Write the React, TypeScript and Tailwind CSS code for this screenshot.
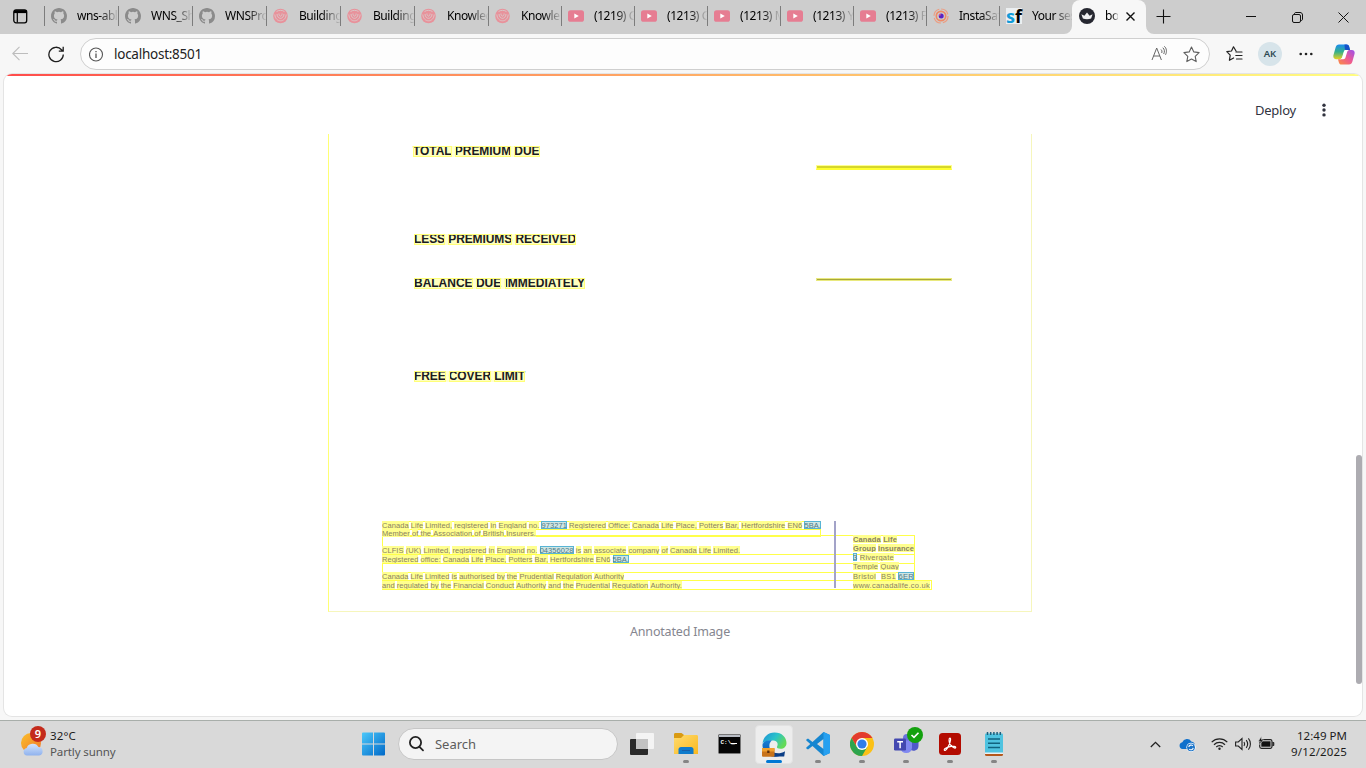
import { useLayoutEffect, useRef, type ReactNode } from "react";

const UI = "font-['Noto_Sans',sans-serif]";

/* Text stretched to a given width through its letter spacing. */
function Fit({ w, className = "", children }: { w: number; className?: string; children: ReactNode }) {
  const ref = useRef<HTMLSpanElement>(null);
  useLayoutEffect(() => {
    const el = ref.current;
    if (!el) return;
    el.style.letterSpacing = "0px";
    const n = el.textContent?.length || 1;
    el.style.letterSpacing = `${(w - el.getBoundingClientRect().width) / n}px`;
  }, [w]);
  return (
    <span ref={ref} className={`inline-block whitespace-pre ${className}`}>
      {children}
    </span>
  );
}

/* ---------- tab icons ---------- */
const GitHub = () => (
  <svg width="16" height="16" viewBox="0 0 16 16" fill="#8b8b8b">
    <path d="M8 0C3.58 0 0 3.58 0 8c0 3.54 2.29 6.53 5.47 7.59.4.07.55-.17.55-.38 0-.19-.01-.82-.01-1.49-2.01.37-2.53-.49-2.69-.94-.09-.23-.48-.94-.82-1.13-.28-.15-.68-.52-.01-.53.63-.01 1.08.58 1.23.82.72 1.21 1.87.87 2.33.66.07-.52.28-.87.51-1.07-1.78-.2-3.64-.89-3.64-3.95 0-.87.31-1.59.82-2.15-.08-.2-.36-1.02.08-2.12 0 0 .67-.21 2.2.82a7.6 7.6 0 0 1 4 0c1.53-1.04 2.2-.82 2.2-.82.44 1.1.16 1.92.08 2.12.51.56.82 1.27.82 2.15 0 3.07-1.87 3.75-3.65 3.95.29.25.54.73.54 1.48 0 1.07-.01 1.93-.01 2.2 0 .21.15.46.55.38A8 8 0 0 0 16 8c0-4.42-3.58-8-8-8z" />
  </svg>
);
const Swirl = () => (
  <svg width="16" height="16" viewBox="0 0 16 16" fill="none">
    <circle cx="7.500" cy="8" r="7.300" fill="#e8929b" />
    <path d="M1.800 6.500c.6 8.400 10.800 8.400 11.400 0M4 6c.4 5.800 6.600 5.800 7 0M5.900 5.500c.2 3.600 3 3.600 3.200 0M3.500 3.600c2.200-1.700 5.800-1.700 8 0" stroke="#d9c9cb" strokeWidth=".9" />
  </svg>
);
const Tube = () => (
  <svg width="16" height="16" viewBox="0 0 16 16">
    <rect x="0" y="2.300" width="16" height="11.500" rx="2.600" fill="#e67d92" />
    <path d="M6.300 5.600v4.900L10.800 8z" fill="#fff" />
  </svg>
);
const Insta = () => (
  <svg width="16" height="16" viewBox="0 0 16 16" fill="none">
    <circle cx="8" cy="8" r="7" stroke="#ed9c80" strokeWidth="1.200" strokeDasharray="9 2" />
    <circle cx="8" cy="8" r="4.700" stroke="#ef8a66" strokeWidth="1.700" />
    <circle cx="8.200" cy="8" r="2.500" fill="#5a22c4" />
    <circle cx="6.800" cy="6.800" r="1" fill="#d95b8d" />
  </svg>
);
const Sf = () => (
  <span className="flex h-4 w-4 items-center justify-center bg-[#eceff1] font-['Open_Sans',sans-serif] text-[18px] leading-[16px] font-bold">
    <span className="w-[9px] text-[#129bd8]">s</span>
    <span className="w-[7px] text-black">f</span>
  </span>
);
const Crown = () => (
  <svg width="16" height="16" viewBox="0 0 16 16">
    <circle cx="8" cy="8" r="8" fill="#262730" />
    <path d="M2.400 6.300l3 1.500L8 4.600l2.600 3.200 3-1.500-1.500 4.200c-2.400.9-5.800.9-8.200 0z" fill="#f0f0f2" />
  </svg>
);

const tabs: { icon: () => ReactNode; label: string }[] = [
  { icon: GitHub, label: "wns-abl" },
  { icon: GitHub, label: "WNS_Sh" },
  { icon: GitHub, label: "WNSPro" },
  { icon: Swirl, label: "Building" },
  { icon: Swirl, label: "Building" },
  { icon: Swirl, label: "Knowled" },
  { icon: Swirl, label: "Knowle" },
  { icon: Tube, label: "(1219) G" },
  { icon: Tube, label: "(1213) G" },
  { icon: Tube, label: "(1213) M" },
  { icon: Tube, label: "(1213) Y" },
  { icon: Tube, label: "(1213) F" },
  { icon: Insta, label: "InstaSaf" },
  { icon: Sf, label: "Your ses" },
];

function TabStrip() {
  return (
    <div className="flex h-[34px] shrink-0 bg-[#cdcdcd]">
      <div className="flex w-[44px] shrink-0 items-center pb-0.5 pl-[13px]">
        <svg width="15" height="15" viewBox="0 0 15 15" fill="none" stroke="#000">
          <rect x="0.800" y="0.800" width="12.900" height="13" rx="2.200" strokeWidth="1.300" />
          <path d="M1 2.600h12.500" strokeWidth="3" />
          <path d="M4.300 3v10.500" strokeWidth="1.200" />
        </svg>
      </div>
      {tabs.map((t, i) => (
        <div key={i} className={`flex shrink-0 items-center pb-0.5 ${i < 6 ? "w-[74px]" : "w-[73px]"}`}>
          <span className="h-5 w-px shrink-0 bg-[#7c7c7c]" />
          <span className="ml-[6px] w-4 shrink-0">{t.icon()}</span>
          <span className="ml-[10px] min-w-0 flex-1 overflow-hidden [mask-image:linear-gradient(to_right,black_55%,transparent_102%)] text-[12px] leading-[18px] tracking-[-0.45px] whitespace-nowrap text-black">
            {t.label}
          </span>
        </div>
      ))}
      <div className="relative flex w-[74px] shrink-0 items-center rounded-t-lg bg-[#f7f7f7] pb-0.5 pl-[7px]">
        <svg className="absolute bottom-0 -left-2" width="8" height="8">
          <path d="M8 0v8H0a8 8 0 0 0 8-8z" fill="#f7f7f7" />
        </svg>
        <svg className="absolute -right-2 bottom-0" width="8" height="8">
          <path d="M0 0v8h8a8 8 0 0 1-8-8z" fill="#f7f7f7" />
        </svg>
        <Crown />
        <span className="ml-[10px] w-[13px] overflow-hidden [mask-image:linear-gradient(to_right,black_55%,transparent_110%)] text-[12px] leading-[18px] tracking-[-0.3px] text-black">
          bo
        </span>
        <svg className="ml-[8px]" width="9" height="9" viewBox="0 0 9 9" stroke="#111" strokeWidth="1.400">
          <path d="M.5.500l8 8M8.500.500l-8 8" />
        </svg>
      </div>
      <div className="flex flex-1 items-center pb-px pl-[10px]">
        <svg width="15" height="15" viewBox="0 0 15 15" stroke="#111" strokeWidth="1.100">
          <path d="M7.500.500v14M.5 7.500h14" />
        </svg>
        <svg className="mt-px ml-[75px]" width="10" height="10" stroke="#111">
          <path d="M0 4.500h10" />
        </svg>
        <svg className="mt-px ml-[36px]" width="11" height="11" viewBox="0 0 11 11" fill="none" stroke="#111">
          <rect x=".5" y="2.500" width="8" height="8" rx="1.500" />
          <path d="M2.500 2C2.500 1 3 .5 4 .5h4c1.500 0 2.500 1 2.500 2.500v4c0 1-.500 1.500-1.500 1.500" />
        </svg>
        <svg className="mt-px ml-[35px]" width="11" height="11" viewBox="0 0 11 11" stroke="#111">
          <path d="M.5.500l10 10M10.500.500l-10 10" />
        </svg>
      </div>
    </div>
  );
}

function Toolbar() {
  return (
    <div className="flex h-[40px] shrink-0 items-center bg-[#f7f7f7]">
      <svg className="ml-[12px]" width="16" height="16" viewBox="0 0 16 16" fill="none" stroke="#bdbdbd" strokeWidth="1.100">
        <path d="M16 7.500H.8M7.500 .8L.8 7.500 7.500 14.200" />
      </svg>
      <svg className="ml-[20px]" width="17" height="17" viewBox="0 0 17 17" fill="none" stroke="#1e1e1e" strokeWidth="1.300">
        <path d="M15.300 8.500a7.200 7.200 0 1 1-1.800-4.800L15 5.200M15.200.8V5.200H10.800" />
      </svg>
      <div className="ml-[15px] flex h-8 w-[1130px] items-center rounded-full border border-[#cfcfcf] bg-[#fdfdfd] pl-[8px]">
        <svg width="15" height="15" viewBox="0 0 15 15" fill="none" stroke="#555">
          <circle cx="7" cy="7.500" r="6.500" strokeWidth="1.100" />
          <path d="M7 6.500v4.500M7 4v1.300" strokeWidth="1.300" />
        </svg>
        <span className="ml-[10px] text-[13.500px] leading-5 text-[#222]">
          <Fit w={88}>localhost:8501</Fit>
        </span>
        <svg className="ml-auto" width="17" height="16" viewBox="0 0 17 16" fill="none" stroke="#666" strokeWidth="1">
          <path d="M1 14L5.700 2l4.700 12M2.600 10h6.300M10 3.500c1 .8 1.200 2.200.7 3.500M11.800 1.700c1.900 1.700 2 4.200.9 6.300M13.300.3c2.500 2.100 2.700 5.700 1.200 8.500" />
        </svg>
        <svg className="mr-[9px] ml-[15px]" width="17" height="17" viewBox="0 0 17 17" fill="none" stroke="#5f5f5f" strokeWidth="1.100" strokeLinejoin="round">
          <path d="M8.500 1l2.300 4.900 5.300.7-3.900 3.700 1 5.300-4.700-2.600-4.700 2.600 1-5.300L.9 6.600l5.300-.7z" />
        </svg>
      </div>
      <svg className="ml-[16px]" width="17" height="16" viewBox="0 0 17 16" fill="none" stroke="#222" strokeWidth="1.200" strokeLinejoin="round" strokeLinecap="round">
        <path d="M10 5L7.500.8 5.500 5 .8 5.700l3.400 3.400-.8 5.200 4.200-2.300M10 6h6M9.800 9.500H16M10.500 13H16" />
      </svg>
      <span className="ml-[15px] flex h-6 w-6 items-center justify-center rounded-full bg-[#d7e4ea] text-[9.500px] font-semibold text-[#2c4a52]">
        AK
      </span>
      <svg className="ml-[17px]" width="15" height="4" fill="#222">
        <circle cx="1.700" cy="2" r="1.300" />
        <circle cx="7" cy="2" r="1.300" />
        <circle cx="12.300" cy="2" r="1.300" />
      </svg>
      <svg className="ml-[19px]" width="22" height="21" viewBox="0 0 22 21">
        <defs>
          <linearGradient id="cpA" x1="0" y1="0" x2="0" y2="1">
            <stop offset="0" stopColor="#1a8cf0" />
            <stop offset=".5" stopColor="#35b08a" />
            <stop offset="1" stopColor="#e8d021" />
          </linearGradient>
          <linearGradient id="cpB" x1="1" y1="0" x2="0" y2="1">
            <stop offset="0" stopColor="#9a50ee" />
            <stop offset=".5" stopColor="#ee5a91" />
            <stop offset="1" stopColor="#fb9040" />
          </linearGradient>
        </defs>
        <path d="M6 .5h7.500c1.600 0 2.200.8 2.700 2.300L17 6h-3.600c-1.400 0-2 .7-2.400 2l-1.600 5.300c-.4 1.300-1.100 1.900-2.400 1.900H3.200C.9 15.200-.1 13.200.5 11L2.600 3.400C3.100 1.500 4.200.5 6 .5z" fill="url(#cpA)" />
        <path d="M11.500.500h2c1.600 0 2.200.8 2.700 2.300L17 6h-3.500c-1 0-1.500-.5-1.700-1.500z" fill="#1551c8" />
        <path d="M16 20.500H8.500c-1.600 0-2.200-.8-2.700-2.300L5 15.200h2.500c1.400 0 2-.7 2.400-2L11.500 8c.4-1.300 1.100-2 2.400-2h4.900c2.300 0 3.300 1.800 2.700 4l-2.100 7.600c-.5 1.900-1.600 2.900-3.400 2.900z" fill="url(#cpB)" />
        <path d="M12 6h4c-1.300.4-1.700 1.500-2 2.500l-1.500 5c-.3 1.200-1 1.700-2.200 1.700H6.500c1.500-.2 2.200-.9 2.600-2L10.700 8c.2-1 .6-1.700 1.300-2z" fill="#fff" />
      </svg>
    </div>
  );
}

/* ---------- annotated page ---------- */
const headings = [
  { t: "TOTAL PREMIUM DUE", w: 126.5, c: "left-[85px] top-[12px]" },
  { t: "LESS PREMIUMS RECEIVED", w: 162, c: "left-[86px] top-[100px]" },
  { t: "BALANCE DUE IMMEDIATELY", w: 171, c: "left-[86px] top-[144px]" },
  { t: "FREE COVER LIMIT", w: 111, c: "left-[86px] top-[237px]" },
];

const fine: { t: string; w: number; c: string }[] = [
  { t: "Canada Life Limited, registered in England no. #973271 Registered Office: Canada Life Place, Potters Bar, Hertfordshire EN6 #5BA.", w: 439, c: "left-[54px] top-[387px] h-[8px]" },
  { t: "Member of the Association of British Insurers.", w: 154, c: "left-[54px] top-[395px] h-[8px]" },
  { t: "CLFIS (UK) Limited, registered in England no. #04356028 is an associate company of Canada Life Limited.", w: 358, c: "left-[54px] top-[412px] h-[8px]" },
  { t: "Registered office: Canada Life Place, Potters Bar, Hertfordshire EN6 #5BA.", w: 247, c: "left-[54px] top-[421px] h-[8px]" },
  { t: "Canada Life Limited is authorised by the Prudential Regulation Authority", w: 242, c: "left-[54px] top-[438px] h-[8px]" },
  { t: "and regulated by the Financial Conduct Authority and the Prudential Regulation Authority.", w: 300, c: "left-[54px] top-[447px] h-[8px]" },
  { t: "Canada Life", w: 44, c: "left-[525px] top-[401px] h-[8px] font-bold" },
  { t: "Group Insurance", w: 61, c: "left-[525px] top-[410px] h-[8px] font-bold" },
  { t: "#3 Rivergate", w: 41, c: "left-[525px] top-[419px] h-[8px]" },
  { t: "Temple Quay", w: 46, c: "left-[525px] top-[428px] h-[8px]" },
  { t: "Bristol  BS1 #6ER", w: 61, c: "left-[525px] top-[438px] h-[8px]" },
  { t: "www.canadalife.co.uk", w: 77, c: "left-[525px] top-[447px] h-[8px]" },
];

const blocks = [
  "left-[54px] top-[387px] w-[439px] h-[9px]",
  "left-[54px] top-[395px] w-[439px] h-[8px]",
  "left-[54px] top-[401px] w-[533px] h-[20px]",
  "left-[54px] top-[420px] w-[533px] h-[10px]",
  "left-[54px] top-[429px] w-[533px] h-[10px]",
  "left-[54px] top-[438px] w-[533px] h-[9px]",
  "left-[54px] top-[446px] w-[550px] h-[10px]",
];

function Annotated() {
  return (
    <div className="relative h-[478px] w-[704px] shrink-0 border-r border-b border-l border-[#f6f6bc] border-l-[#ffff75] font-['Liberation_Sans',Arial,sans-serif]">
      <div className="absolute inset-y-0 -left-px w-[704px]">
        {headings.map((h) => (
          <div key={h.t} className={`absolute flex h-[11px] bg-[#ffffd2] text-[12px] leading-[11px] font-bold text-[#1b1b22] ${h.c}`}>
            <Fit w={h.w}>
              {h.t.split(" ").map((s, i) => (
                <span key={i}>
                  {i > 0 && " "}
                  <span className="inline-block h-[11px] bg-[#ffffbe] align-top outline outline-[1px] -outline-offset-1 outline-[#ffff78]">{s}</span>
                </span>
              ))}
            </Fit>
          </div>
        ))}
        <div className="absolute top-[31px] left-[488px] h-[5px] w-[136px] border border-b-2 border-[#ffff8c] border-b-[#ffff30] bg-[#d6d62c]" />
        <div className="absolute top-[144px] left-[488px] h-[3px] w-[136px] border border-[#e9e97e] bg-[#a8a83a]" />
        {blocks.map((b) => (
          <div key={b} className={`absolute border border-[#ffff4a] ${b}`} />
        ))}
        {fine.map((f, k) => (
          <div key={k} className={`absolute overflow-hidden text-[7.500px] leading-[9px] text-[#8a8262] ${f.c}`}>
            <Fit w={f.w} className="h-[8px] align-top">
              {f.t.split(" ").map((s, i) => (
                <span key={i}>
                  {i > 0 && " "}
                  {s[0] === "#" ? (
                    <span className="inline-block h-[8px] bg-[#cfe6e4] align-top text-[#507986] shadow-[inset_0_0_0_1px_#58b4d4]">{s.slice(1)}</span>
                  ) : (
                    s && <span className="inline-block h-[8px] bg-[#ffff8e] align-top">{s}</span>
                  )}
                </span>
              ))}
            </Fit>
          </div>
        ))}
        <div className="absolute top-[387px] left-[506px] h-[67px] w-[2px] bg-[#a3a3c8]" />
      </div>
    </div>
  );
}

function Page() {
  return (
    <div className="flex flex-1 bg-[#f7f7f7] px-1 pb-1">
      <div className="relative flex flex-1 flex-col overflow-hidden rounded-lg bg-white shadow-[0_0_0_1px_#e4e4e4]">
        <div className="h-0.5 shrink-0 bg-gradient-to-r from-[#ff4b4b] to-[#fffd80]" />
        <div className="flex h-[58px] shrink-0 items-center justify-end pt-[11px] pr-[35px] text-[13px] text-[#31333f]">
          <Fit w={41}>Deploy</Fit>
          <svg className="ml-[26px]" width="5" height="15" fill="#31333f">
            <circle cx="2" cy="2.200" r="1.700" />
            <circle cx="2" cy="7" r="1.700" />
            <circle cx="2" cy="11.900" r="1.700" />
          </svg>
        </div>
        <div className="flex flex-col pl-[324px]">
          <Annotated />
          <div className="mt-[10px] w-[704px] text-center text-[12.500px] leading-5 text-[#85868f]">
            <Fit w={100}>Annotated Image</Fit>
          </div>
        </div>
        <div className="absolute top-[381px] right-0 h-[229px] w-[6px] rounded-full bg-[#adacb1]" />
      </div>
    </div>
  );
}

/* ---------- taskbar ---------- */
function Cell({ children, run, active }: { children?: ReactNode; run?: boolean; active?: boolean }) {
  return (
    <div className="flex h-[46px] w-11 flex-col items-center justify-center">
      <div className={`relative flex h-[39px] w-[38px] items-center justify-center rounded ${active ? "border border-[#e2e2e2] bg-[#ededed]" : ""}`}>
        {children}
        {run && <span className="absolute bottom-px left-4 h-[3px] w-[6px] rounded-full bg-[#858585]" />}
        {active && <span className="absolute bottom-0 left-[10px] h-[3px] w-4 rounded-full bg-[#0078d4]" />}
      </div>
    </div>
  );
}

function Taskbar() {
  return (
    <div className="flex h-[48px] shrink-0 items-center border-t border-[#a8aeaa] bg-[#d9d9d9] pb-px">
      <div className="flex w-[352px] items-center pl-[20px]">
        <svg width="27" height="32" viewBox="0 0 27 32" className="-mt-1 overflow-visible">
          <defs>
            <linearGradient id="sun" x1="0" y1="0" x2="1" y2="1">
              <stop offset="0" stopColor="#fbc02b" />
              <stop offset="1" stopColor="#f0762a" />
            </linearGradient>
            <linearGradient id="cl" x1="0" y1="0" x2="0" y2="1">
              <stop offset="0" stopColor="#d4e4fb" />
              <stop offset="1" stopColor="#8fb2ee" />
            </linearGradient>
          </defs>
          <circle cx="11" cy="17" r="10" fill="url(#sun)" />
          <path d="M7 29.500a3.800 3.800 0 0 1-.3-7.500A6.300 5.800 0 0 1 18.500 21a4.300 4.300 0 0 1 .7 8.500z" fill="url(#cl)" />
          <circle cx="18" cy="8" r="8" fill="#c42b1c" />
          <text x="18" y="12" textAnchor="middle" fontSize="11" fontWeight="600" fill="#fff">9</text>
        </svg>
        <div className="-mt-px ml-[3px] flex flex-col text-[11.500px] leading-4">
          <span className="text-[#1c1c1c]"><Fit w={26}>32°C</Fit></span>
          <span className="text-[#555]"><Fit w={65.500}>Partly sunny</Fit></span>
        </div>
      </div>
      <Cell>
        <svg width="24" height="24" viewBox="0 0 24 24">
          <defs>
            <linearGradient id="win" x1="0" y1="0" x2="1" y2="1">
              <stop offset="0" stopColor="#4cc8fa" />
              <stop offset="1" stopColor="#0069c8" />
            </linearGradient>
          </defs>
          <path d="M1 .5H11v11H0v-10a1 1 0 0 1 1-1zM12 .5h10a1 1 0 0 1 1 1v10H12zM0 12.500H11v11H1a1 1 0 0 1-1-1zM12 12.500h11v10a1 1 0 0 1-1 1H12z" fill="url(#win)" />
        </svg>
      </Cell>
      <div className="ml-[2px] flex h-[32px] w-[220px] items-center rounded-full border border-[#c6c6c6] bg-[#f4f4f4] pl-[10px]">
        <svg width="16" height="16" viewBox="0 0 16 16" fill="none" stroke="#222" strokeWidth="1.800" strokeLinecap="round">
          <circle cx="6.500" cy="6.500" r="5.600" />
          <path d="M10.500 10.800l3.500 3.500" />
        </svg>
        <span className="mt-px ml-[10px] text-[13px] text-[#5c5c5c]"><Fit w={41}>Search</Fit></span>
      </div>
      <div className="ml-[2px] flex">
        <Cell>
          <svg width="24" height="24" viewBox="0 0 24 24">
            <rect x="0" y="7" width="18" height="16" rx="1" fill="#2a2a2a" />
            <rect x="6" y="1" width="18" height="16" rx="1" fill="#f4f4f4" />
            <path d="M6 7h12v10H6z" fill="#c2c2c2" />
          </svg>
        </Cell>
        <Cell run>
          <svg width="24" height="24" viewBox="0 0 24 24">
            <defs>
              <linearGradient id="fold" x1="0" y1="0" x2="1" y2="1">
                <stop offset="0" stopColor="#ffdb6e" />
                <stop offset="1" stopColor="#f9b81f" />
              </linearGradient>
            </defs>
            <path d="M0 2.500C0 1.500.6 1 1.500 1h6L10 3v5H0z" fill="#d99a12" />
            <path d="M0 6h7l3-3h12.500c1 0 1.500.6 1.500 1.500V22H0z" fill="url(#fold)" />
            <path d="M4.500 22v-4.500c0-1.400 1-2.500 2.500-2.500h10c1.500 0 2.500 1.100 2.500 2.500V22z" fill="#0f7bcc" />
            <path d="M8 18.500h8" stroke="#1a5fa8" />
          </svg>
        </Cell>
        <Cell>
          <svg width="23" height="20" viewBox="0 0 23 20" className="mr-px">
            <rect x=".5" y=".5" width="22" height="19" rx="1" fill="#050505" stroke="#777" />
            <path d="M1 1h21v2H1z" fill="#b8bcc4" />
            <text x="2.500" y="10" fontSize="6" fontWeight="bold" fill="#fff" fontFamily="Liberation Mono">C:\_</text>
            <path d="M13 9.500h6" stroke="#fff" />
          </svg>
        </Cell>
        <Cell active>
          <svg width="25" height="25" viewBox="0 0 25 25">
            <defs>
              <linearGradient id="edA" x1="0" y1="0" x2="1" y2=".5">
                <stop offset="0" stopColor="#1d8fd8" />
                <stop offset=".55" stopColor="#2bc3c9" />
                <stop offset="1" stopColor="#64da58" />
              </linearGradient>
              <linearGradient id="edB" x1="0" y1="0" x2="0" y2="1">
                <stop offset="0" stopColor="#1580d8" />
                <stop offset="1" stopColor="#0e4fa0" />
              </linearGradient>
            </defs>
            <path d="M.5 12C1 5 6 .5 12.500.500 20 .5 24.500 5.500 24.500 11c0 3.500-2.500 5.800-6 5.800-2.500 0-4-1-3.500-2 1.500-2.500.500-6-3.500-6.300C6 8 1 9.500.5 12z" fill="url(#edA)" />
            <path d="M.5 12.500C1.500 9 6 7.500 10 8.500 7 10.500 6.500 15 9 18.500c3 4 8.500 4.700 13.500 1.500-2.500 4-6 4.700-10 4.700C5.500 24.500.2 19 .5 12.500z" fill="url(#edB)" />
            <path d="M11 20c4 2 8 1.500 12-.8l-.8 5.300H12z" fill="#0c3f86" />
            <rect x="0" y="16" width="12.500" height="8.700" rx="1" fill="#c8731a" />
            <path d="M0 16h12.500v3.500H0z" fill="#f0a02e" />
            <rect x="5.200" y="18.500" width="2.300" height="2.500" fill="#5a2d0a" />
          </svg>
        </Cell>
        <Cell run>
          <svg width="24" height="24" viewBox="0 0 24 24">
            <path d="M17.500 0L24 3v18l-6.500 3L6.500 14 2 17.500.300 16.500V15.500L4.300 12 .3 8.500V7.500L2 6.500 6.500 10zM17.500 7L11 12l6.500 5z" fill="#1686d0" fillRule="evenodd" />
            <path d="M17.500 0L24 3v18l-6.500 3z" fill="#26a0f0" />
          </svg>
        </Cell>
        <Cell run>
          <svg width="24" height="24" viewBox="0 0 24 24">
            <circle cx="12" cy="12" r="12" fill="#fbc116" />
            <path d="M1.600 6A12 12 0 0 1 22.400 6H12L7 15z" fill="#e33b2e" />
            <path d="M1.600 6A12 12 0 0 0 12 24l5.200-9-10.400 0z" fill="#2da44e" />
            <circle cx="12" cy="12" r="6" fill="#fff" />
            <circle cx="12" cy="12" r="4.600" fill="#2f7de9" />
          </svg>
        </Cell>
        <Cell run>
          <svg width="30" height="28" viewBox="0 0 30 28" className="-mt-[7px] ml-1.5 shrink-0 overflow-visible">
            <circle cx="13" cy="11" r="4" fill="#6b73dd" />
            <path d="M15 13h9.500v6a5 5 0 0 1-9.500 2z" fill="#5059c9" />
            <path d="M6.500 13.500H18V21a5.800 5.800 0 0 1-11.500 0z" fill="#8088f0" />
            <rect x="0" y="11.500" width="12" height="12" rx="1.200" fill="#4348b0" />
            <path d="M3.200 14.700h5.800M6.100 14.700v6.600" stroke="#fff" strokeWidth="1.500" />
            <circle cx="21" cy="8" r="8" fill="#13a10e" />
            <path d="M17.500 8l2.500 2.400 4.500-4.600" stroke="#fff" strokeWidth="1.600" fill="none" />
          </svg>
        </Cell>
        <Cell run>
          <svg width="22" height="22" viewBox="0 0 22 22">
            <rect width="22" height="22" rx="3.500" fill="#b30b00" />
            <path d="M5.500 17.300c-1.200-1.400 2.200-3 5.500-3.700s6-.3 5.700 1c-.4 1.400-3.600-.4-5.400-3-1.300-2-1.800-6.300-.5-6.500 1.400-.2.700 3.600-.8 6.800-1.300 3-3.500 6.400-4.500 5.400z" fill="none" stroke="#fff" strokeWidth="1.200" />
          </svg>
        </Cell>
        <Cell run>
          <svg width="18" height="24" viewBox="0 0 18 24">
            <rect x="0" y="20" width="18" height="4" rx="1.500" fill="#b5581c" />
            <rect x="0" y="1.500" width="18" height="20.500" rx="1" fill="#4fc3e0" />
            <path d="M0 20.500h18v1.500H0z" fill="#e8f2f5" />
            <path d="M2.500 0v3M5.700 0v3M8.900 0v3M12.100 0v3M15.300 0v3" stroke="#1d5f7c" strokeWidth="1.500" />
            <path d="M3 7h12M3 11.300h12M3 15.600h12" stroke="#11637f" strokeWidth="1.500" />
          </svg>
        </Cell>
      </div>
      <div className="flex flex-1 items-center pr-[19px]">
        <svg className="ml-[134px]" width="11" height="7" viewBox="0 0 11 7" fill="none" stroke="#222" strokeWidth="1.300">
          <path d="M.8 6l4.700-4.700L10.200 6" />
        </svg>
        <svg className="mt-0.5 ml-[18px]" width="17" height="14" viewBox="0 0 17 14">
          <path d="M3.500 11A3.400 3.400 0 0 1 3.300 4.300 5 5 0 0 1 12.300 3.500c2.300.3 3.700 2 3.500 4L12 11z" fill="#0f70cc" />
          <circle cx="12" cy="9.300" r="4.600" fill="#fff" />
          <circle cx="12" cy="9.300" r="3.900" fill="#1a73c8" />
          <path d="M9.800 9a2.300 2.300 0 0 1 4-1.200M14.200 9.800a2.300 2.300 0 0 1-4 1.200" stroke="#fff" strokeWidth="1.100" fill="none" />
        </svg>
        <svg className="ml-[15px]" width="17" height="14" viewBox="0 0 17 14" fill="none" stroke="#222" strokeWidth="1.200">
          <path d="M.7 5.200a11 11 0 0 1 15.600 0M3 7.700a7.800 7.800 0 0 1 11 0M5.300 10a4.500 4.500 0 0 1 6.400 0" />
          <circle cx="8.500" cy="11.800" r="1.200" fill="#222" stroke="none" />
        </svg>
        <svg className="ml-[7px]" width="17" height="14" viewBox="0 0 17 14" fill="none" stroke="#222" strokeWidth="1.100">
          <path d="M.6 5h2.700L7 1.500v11L3.300 9H.6zM9 5c.8 1.200.8 2.800 0 4M11.200 3.200c1.700 2.200 1.700 5.400 0 7.600M13.400 1.400c2.700 3.200 2.700 8 0 11.200" />
        </svg>
        <svg className="-mt-0.5 ml-[6px]" width="17" height="14" viewBox="0 0 17 14">
          <rect x="1.700" y="3.700" width="12.300" height="8.600" rx="1.800" fill="none" stroke="#222" strokeWidth="1.200" />
          <rect x="3.300" y="5.300" width="9.200" height="5.400" fill="#111" />
          <path d="M14.500 6.500h1.300v3h-1.300" stroke="#222" fill="#222" />
          <path d="M3.400.500L.3 5.300h2L1.600 8.500 5.500 3.800h-2z" fill="#111" stroke="#d9d9d9" strokeWidth=".6" />
        </svg>
        <div className="-mt-px ml-auto flex flex-col items-end text-[11.500px] leading-4 text-[#1c1c1c]">
          <Fit w={50}>12:49 PM</Fit>
          <Fit w={56}>9/12/2025</Fit>
        </div>
      </div>
    </div>
  );
}

export default function App() {
  return (
    <div className={`flex h-[768px] w-[1366px] flex-col overflow-hidden bg-[#f7f7f7] ${UI}`}>
      <TabStrip />
      <Toolbar />
      <Page />
      <Taskbar />
    </div>
  );
}
